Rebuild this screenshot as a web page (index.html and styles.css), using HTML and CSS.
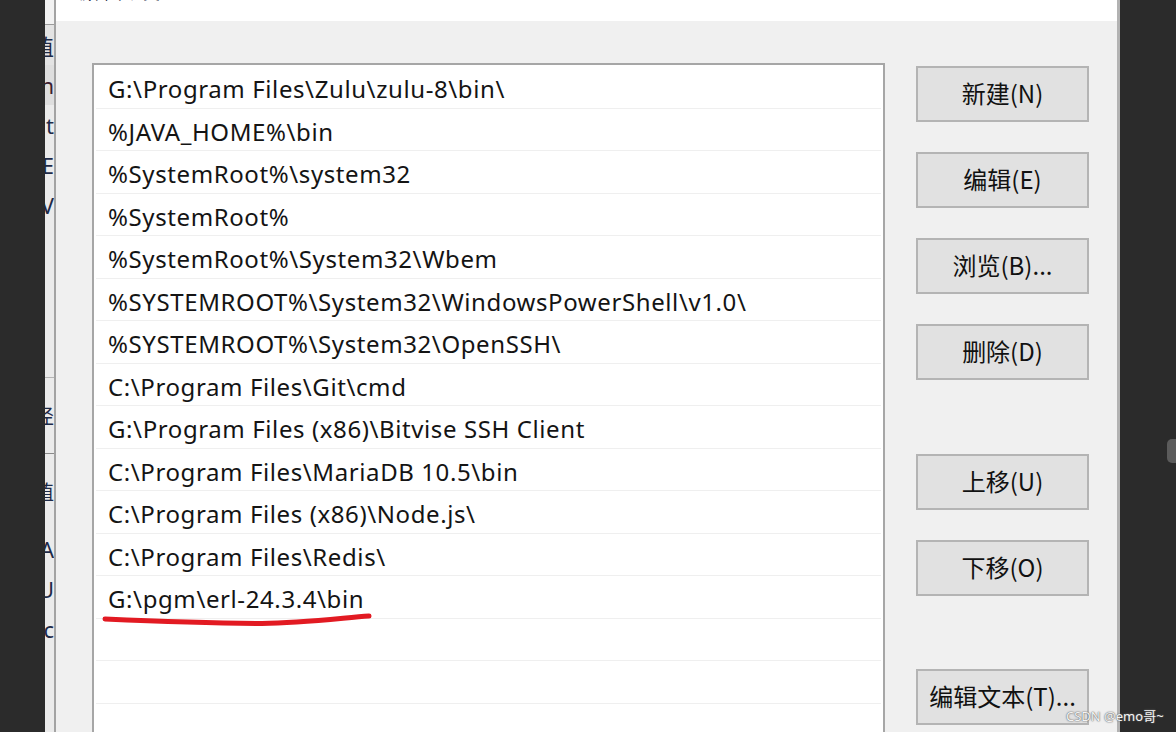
FILE: index.html
```html
<!DOCTYPE html>
<html lang="zh-CN">
<head>
    <meta charset="UTF-8">
    <title>编辑环境变量</title>
    <link rel="stylesheet" href="styles.css">
</head>
<body>
    <div class="desk-left"></div>

    <!-- 后面那个窗口只露出一条边 -->
    <div class="behind">
        <div class="behind-top"></div>
        <div class="frag frag-sel">值</div>
        <div class="frag frag-sel2">n</div>
        <div class="frag">at</div>
        <div class="frag">E</div>
        <div class="frag">V</div>
        <div class="behind-gap"></div>
        <div class="behind-band"></div>
        <div class="frag frag-cjk">径</div>
        <div class="behind-line"></div>
        <div class="frag frag-cjk">值</div>
        <div class="frag">A</div>
        <div class="frag">U</div>
        <div class="frag">c</div>
    </div>

    <div class="dialog">
        <div class="titlebar">
            <span class="title">编辑环境变量</span>
        </div>
        <div class="dialog-body">
            <div class="path-list">
                <div class="row">G:\Program Files\Zulu\zulu-8\bin\</div>
                <div class="row">%JAVA_HOME%\bin</div>
                <div class="row">%SystemRoot%\system32</div>
                <div class="row">%SystemRoot%</div>
                <div class="row">%SystemRoot%\System32\Wbem</div>
                <div class="row">%SYSTEMROOT%\System32\WindowsPowerShell\v1.0\</div>
                <div class="row">%SYSTEMROOT%\System32\OpenSSH\</div>
                <div class="row">C:\Program Files\Git\cmd</div>
                <div class="row">G:\Program Files (x86)\Bitvise SSH Client</div>
                <div class="row">C:\Program Files\MariaDB 10.5\bin</div>
                <div class="row">C:\Program Files (x86)\Node.js\</div>
                <div class="row">C:\Program Files\Redis\</div>
                <div class="row">G:\pgm\erl-24.3.4\bin</div>
                <div class="row"></div>
                <div class="row"></div>
                <div class="row"></div>

                <svg class="scribble" width="300" height="20" viewBox="0 0 300 20">
                    <path d="M11 10 C 58 12, 108 14, 168 14.5 C 208 14, 248 9, 275 7" fill="none" stroke="#e21a22" stroke-width="5" stroke-linecap="round"/>
                </svg>
            </div>

            <div class="buttons">
                <button class="btn">新建(N)</button>
                <button class="btn">编辑(E)</button>
                <button class="btn">浏览(B)...</button>
                <button class="btn">删除(D)</button>
                <button class="btn btn-move">上移(U)</button>
                <button class="btn">下移(O)</button>
                <button class="btn btn-text">编辑文本(T)...</button>
            </div>
        </div>
    </div>

    <div class="desk-right">
        <div class="thumb"></div>
    </div>

    <div class="watermark">CSDN @emo哥~</div>
</body>
</html>
```

FILE: styles.css
```css
* {
    margin: 0;
    padding: 0;
    box-sizing: border-box;
}

body {
    width: 1176px;
    height: 732px;
    overflow: hidden;
    display: flex;
    background-color: #2b2b2b;
    font-family: "Noto Sans", "Noto Sans CJK SC", sans-serif;
    color: #111;
}

.desk-left {
    width: 45px;
    flex-shrink: 0;
}

/* 后面窗口的边 */
.behind {
    width: 9px;
    flex-shrink: 0;
    background-color: #ebebeb;
    display: flex;
    flex-direction: column;
    overflow: hidden;
}

.behind-top {
    height: 25px;
    border-bottom: 1px solid #9a9a9a;
    background-color: #f2f2f2;
}

.frag {
    height: 40px;
    display: flex;
    justify-content: flex-end;
    align-items: center;
    white-space: nowrap;
    font-size: 22px;
    color: #1d2a48;
}

.frag-cjk {
    height: 75px;
    font-size: 20px;
}

.frag-sel {
    background-color: #e3e3e3;
}

.frag-sel2 {
    background-color: #dedede;
    color: #3a2030;
}

.behind-gap {
    height: 152px;
}

.behind-band {
    height: 1px;
    background-color: #b5b5b5;
}

.behind-line {
    height: 1px;
    background-color: #8a8a8a;
}

.dialog {
    width: 1066px;
    flex-shrink: 0;
    border-left: 2px solid #a3a3a3;
    border-right: 3px solid #b2b2b2;
    background-color: #f0f0f0;
    display: flex;
    flex-direction: column;
}

.titlebar {
    height: 21px;
    background-color: #fff;
    padding-left: 19px;
    overflow: hidden;
}

.title {
    display: block;
    margin-top: -17px;
    font-size: 17px;
    line-height: 20px;
    color: #1d2a48;
}

.dialog-body {
    flex: 1;
    display: flex;
    gap: 31px;
    padding: 42px 28px 0 36px;
    overflow: hidden;
}

.path-list {
    position: relative;
    width: 793px;
    flex-shrink: 0;
    height: 720px;
    border: 2px solid #a6a6a6;
    border-bottom: none;
    background-color: #fff;
    padding-top: 1px;
}

.row {
    height: 42.5px;
    margin: 0 2px;
    padding-left: 12px;
    border-bottom: 1.5px solid #efefef;
    font-size: 24px;
    letter-spacing: 0.6px;
    line-height: 45px;
    white-space: nowrap;
    color: #141414;
}

.scribble {
    position: absolute;
    left: 0;
    top: 544px;
}

.buttons {
    width: 173px;
    display: flex;
    flex-direction: column;
    gap: 30px;
    padding-top: 3px;
}

.btn {
    height: 56px;
    padding-bottom: 3px;
    border: 2px solid #b4b4b4;
    background-color: #e1e1e1;
    font-family: "Noto Sans CJK SC", sans-serif;
    font-size: 24px;
    color: #111;
}

.btn-move {
    margin-top: 44px;
}

.btn-text {
    margin-top: 43px;
}

.desk-right {
    flex: 1;
    display: flex;
    justify-content: flex-end;
    align-items: flex-start;
}

.thumb {
    width: 9px;
    height: 24px;
    margin-top: 439px;
    border-radius: 5px 0 0 5px;
    background-color: #5b5b5b;
}

.watermark {
    position: absolute;
    left: 1066px;
    top: 706px;
    font-family: "Noto Sans", "Noto Sans CJK SC", sans-serif;
    font-size: 13px;
    color: #f4f4f4;
    text-shadow: 0 0 1px #555, 0 0 2px #777;
}
```
